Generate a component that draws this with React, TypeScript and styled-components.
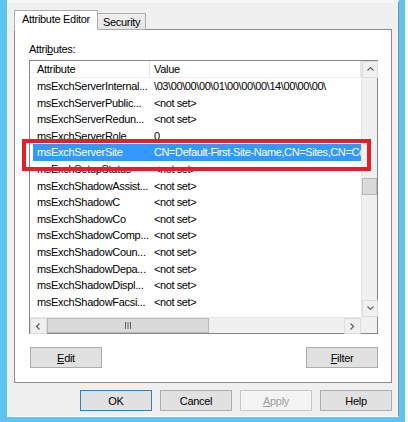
import React from "react";
import styled, { createGlobalStyle } from "styled-components";

const Global = createGlobalStyle`
  html, body { margin: 0; padding: 0; background: #ffffff; }
  body { font-family: "Liberation Sans", Arial, sans-serif; font-size: 11px; letter-spacing: -0.3px; color: #000; }
  * { box-sizing: border-box; }
`;

const Frame = styled.div`
  position: relative;
  width: 405px;
  height: 422px;
  background: #60c5ee;
  padding: 0 6px 5px 7px;
`;

const Client = styled.div`
  width: 100%;
  height: 100%;
  background: #f0f0f0;
  border-left: 1px solid #f9f9f9;
  border-right: 1px solid #8a8e94;
  border-bottom: 1px solid #fbfbfb;
  border-top: 3px solid #f6f6f6;
  padding: 7px 6px 0 6px;
  display: flex;
  flex-direction: column;
`;

const TabStrip = styled.div`
  display: flex;
  align-items: flex-end;
  height: 20px;
  margin-bottom: -1px;
  position: relative;
  z-index: 1;
`;

const Tab = styled.div<{ $active?: boolean }>`
  height: ${(p) => (p.$active ? 20 : 17)}px;
  padding: 0 ${(p) => (p.$active ? 7 : 5)}px;
  display: flex;
  align-items: center;
  border: 1px solid #adadad;
  border-bottom: ${(p) => (p.$active ? "1px solid #ffffff" : "1px solid #adadad")};
  border-left: ${(p) => (p.$active ? "1px solid #adadad" : "none")};
  background: ${(p) => (p.$active ? "#ffffff" : "linear-gradient(#f0f0f0, #e5e5e5)")};
  white-space: nowrap;
  padding-bottom: ${(p) => (p.$active ? 2 : 0)}px;
`;

const Panel = styled.div`
  width: 378px;
  height: 354px;
  border: 1px solid #898c95;
  background: #ffffff;
  padding: 12px 0 0 14px;
  display: flex;
  flex-direction: column;
`;

const Label = styled.div`
  line-height: 14px;
  height: 14px;
  margin-bottom: 4px;
`;

const U = styled.span`
  text-decoration: underline;
  text-underline-offset: 1px;
`;

const ListBox = styled.div`
  width: 349px;
  height: 274px;
  border: 1px solid #828790;
  display: grid;
  grid-template-columns: 331px 16px;
  grid-template-rows: 256px 16px;
  background: #ffffff;
`;

const Content = styled.div`
  overflow: hidden;
  display: flex;
  flex-direction: column;
`;

const Header = styled.div`
  display: flex;
  height: 17px;
  flex: none;
  border-bottom: 1px solid #f0f0f0;
  background: #ffffff;
`;

const HeadCell = styled.div<{ $w?: number; $pl: number }>`
  ${(p) => (p.$w ? `width: ${p.$w}px; flex: none;` : "flex: 1;")}
  padding-left: ${(p) => p.$pl}px;
  line-height: 16px;
  border-right: 1px solid #e5e5e5;
  white-space: nowrap;
`;

const Row = styled.div<{ $sel?: boolean }>`
  display: flex;
  height: 16.6px;
  flex: none;
  margin-left: 3px;
  background: ${(p) => (p.$sel ? "#3399ff" : "transparent")};
  color: ${(p) => (p.$sel ? "#ffffff" : "#000000")};
  line-height: 16.6px;
  white-space: nowrap;
`;

const Cell = styled.div<{ $w?: number }>`
  ${(p) => (p.$w ? `width: ${p.$w}px; flex: none;` : "flex: 1; min-width: 0;")}
  padding-left: 4px;
  overflow: hidden;
  white-space: nowrap;
`;

const ValueText = styled.span`
  letter-spacing: -0.4px;
`;

const VBar = styled.div`
  background: #f0f0f0;
  border-left: 1px solid #e6e6e6;
  display: flex;
  flex-direction: column;
`;

const HBar = styled.div`
  background: #f0f0f0;
  border-top: 1px solid #e6e6e6;
  display: flex;
`;

const ArrowBtn = styled.div<{ $w: number; $h: number }>`
  width: ${(p) => p.$w}px;
  height: ${(p) => p.$h}px;
  flex: none;
  display: flex;
  align-items: center;
  justify-content: center;
  background: #f0f0f0;
  border: 1px solid #dcdcdc;
`;

const VThumb = styled.div`
  height: 17px;
  margin-top: 100px;
  flex: none;
  background: #dadada;
  border: 1px solid #b9b9b9;
`;

const Spacer = styled.div`
  flex: 1;
`;

const HThumb = styled.div`
  width: 162px;
  flex: none;
  background: #dadada;
  border: 1px solid #b9b9b9;
  display: flex;
  align-items: center;
  justify-content: center;
`;

const Corner = styled.div`
  background: #f0f0f0;
`;

const PanelButtons = styled.div`
  display: flex;
  justify-content: space-between;
  width: 349px;
  padding-left: 1px;
  margin-top: 13px;
`;

const Button = styled.div<{ $default?: boolean; $disabled?: boolean }>`
  width: 72px;
  height: 21px;
  display: flex;
  align-items: center;
  justify-content: center;
  background: ${(p) => (p.$disabled ? "#f4f4f4" : "#e1e1e1")};
  border: 1px solid
    ${(p) => (p.$default ? "#3c7fb1" : p.$disabled ? "#c6c8ca" : "#adadad")};
  color: ${(p) => (p.$disabled ? "#a0a0a0" : "#000")};
  white-space: nowrap;
`;

const DialogButtons = styled.div`
  display: flex;
  justify-content: flex-end;
  gap: 8px;
  margin-top: 7px;
  width: 378px;
`;

const Highlight = styled.div`
  position: absolute;
  left: 22px;
  top: 139px;
  width: 349px;
  height: 32px;
  border: 4px solid #e51f29;
  pointer-events: none;
`;

const Chevron = ({ dir }: { dir: "up" | "down" | "left" | "right" }) => {
  const paths: Record<string, string> = {
    up: "M1.5 5.5 L4.5 2.5 L7.5 5.5",
    down: "M1.5 2.5 L4.5 5.5 L7.5 2.5",
    left: "M5.5 1.5 L2.5 4.5 L5.5 7.5",
    right: "M2.5 1.5 L5.5 4.5 L2.5 7.5",
  };
  return (
    <svg width="9" height="9" viewBox="0 0 9 9">
      <path d={paths[dir]} fill="none" stroke="#606060" strokeWidth="1.2" />
    </svg>
  );
};

const Grip = () => (
  <svg width="8" height="7" viewBox="0 0 8 7">
    <path d="M1.5 0 V7 M4 0 V7 M6.5 0 V7" stroke="#606060" strokeWidth="1" />
  </svg>
);

const rows: [string, string][] = [
  ["msExchServerInternal...", "\\03\\00\\00\\00\\01\\00\\00\\00\\14\\00\\00\\00\\"],
  ["msExchServerPublic...", "<not set>"],
  ["msExchServerRedun...", "<not set>"],
  ["msExchServerRole", "0"],
  ["msExchServerSite", "CN=Default-First-Site-Name,CN=Sites,CN=Co"],
  ["msExchSetupStatus", "<not set>"],
  ["msExchShadowAssist...", "<not set>"],
  ["msExchShadowC", "<not set>"],
  ["msExchShadowCo", "<not set>"],
  ["msExchShadowComp...", "<not set>"],
  ["msExchShadowCoun...", "<not set>"],
  ["msExchShadowDepa...", "<not set>"],
  ["msExchShadowDispl...", "<not set>"],
  ["msExchShadowFacsi...", "<not set>"],
];

export default function App() {
  return (
    <>
      <Global />
      <Frame>
        <Client>
          <TabStrip>
            <Tab $active>Attribute Editor</Tab>
            <Tab>Security</Tab>
          </TabStrip>
          <Panel>
            <Label>
              Attri<U>b</U>utes:
            </Label>
            <ListBox>
              <Content>
                <Header>
                  <HeadCell $w={120} $pl={7}>Attribute</HeadCell>
                  <HeadCell $pl={4}>Value</HeadCell>
                </Header>
                {rows.map(([a, v], i) => (
                  <Row key={i} $sel={i === 4}>
                    <Cell $w={117}>{a}</Cell>
                    <Cell>
                      <ValueText>{v}</ValueText>
                    </Cell>
                  </Row>
                ))}
              </Content>
              <VBar>
                <ArrowBtn $w={16} $h={17}>
                  <Chevron dir="up" />
                </ArrowBtn>
                <VThumb />
                <Spacer />
                <ArrowBtn $w={16} $h={17}>
                  <Chevron dir="down" />
                </ArrowBtn>
              </VBar>
              <HBar>
                <ArrowBtn $w={17} $h={16}>
                  <Chevron dir="left" />
                </ArrowBtn>
                <HThumb>
                  <Grip />
                </HThumb>
                <Spacer />
                <ArrowBtn $w={17} $h={16}>
                  <Chevron dir="right" />
                </ArrowBtn>
              </HBar>
              <Corner />
            </ListBox>
            <PanelButtons>
              <Button>
                <U>E</U>dit
              </Button>
              <Button>
                <U>F</U>ilter
              </Button>
            </PanelButtons>
          </Panel>
          <DialogButtons>
            <Button $default>OK</Button>
            <Button>Cancel</Button>
            <Button $disabled>
              <U>A</U>pply
            </Button>
            <Button>Help</Button>
          </DialogButtons>
        </Client>
        <Highlight />
      </Frame>
    </>
  );
}
